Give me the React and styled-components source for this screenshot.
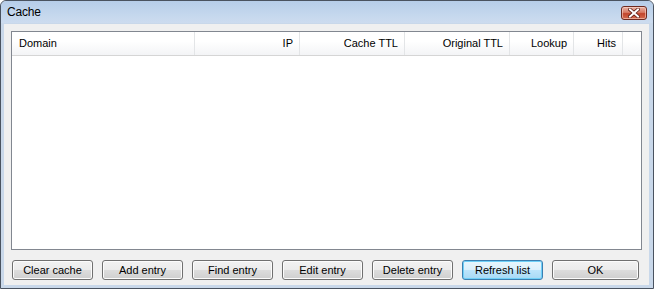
import React from "react";
import styled, { createGlobalStyle } from "styled-components";

const Global = createGlobalStyle`
  html, body { margin: 0; padding: 0; background: #fff; }
  body { font-family: "Liberation Sans", Arial, sans-serif; }
`;

const Window = styled.div`
  width: 654px;
  height: 289px;
  box-sizing: border-box;
  border: 1px solid #4a5360;
  border-radius: 6px 6px 0 0;
  background: #c9d8ea;
  display: flex;
  flex-direction: column;
  overflow: hidden;
`;

const TitleBar = styled.div`
  height: 22px;
  flex: none;
  display: flex;
  align-items: center;
  justify-content: space-between;
  padding: 0 6px 0 6px;
  background: linear-gradient(#b6cde9, #c4d7ed 60%, #cddcef);
  border-radius: 5px 5px 0 0;
`;

const Title = styled.span`
  font-size: 12px;
  color: #000;
  letter-spacing: -0.2px;
`;

const CloseButton = styled.div`
  width: 26px;
  height: 14px;
  box-sizing: border-box;
  margin-top: 1px;
  border: 1px solid #6e2a20;
  border-radius: 3px;
  background: linear-gradient(#e8b3a6, #d77a64 45%, #c2452c 55%, #d36a4e);
  box-shadow: inset 0 0 0 1px rgba(255, 220, 210, 0.55);
  display: flex;
  align-items: center;
  justify-content: center;
`;

const Frame = styled.div`
  flex: 1;
  padding: 1px 4px 3px 3px;
  display: flex;
`;

const Client = styled.div`
  flex: 1;
  background: #f0f0f0;
  padding: 7px 7px 0 7px;
  display: flex;
  flex-direction: column;
`;

const ListView = styled.div`
  width: 631px;
  height: 219px;
  box-sizing: border-box;
  border: 1px solid #828790;
  background: #fff;
  display: flex;
  flex-direction: column;
`;

const Header = styled.div`
  height: 24px;
  box-sizing: border-box;
  display: flex;
  background: linear-gradient(#ffffff, #ffffff 40%, #f3f4f6);
  border-bottom: 1px solid #d5d5d5;
`;

const HeaderCell = styled.div`
  width: ${(p) => p.$w}px;
  flex: ${(p) => (p.$grow ? 1 : "none")};
  box-sizing: border-box;
  border-right: ${(p) => (p.$grow ? "none" : "1px solid #e3e5e7")};
  display: flex;
  align-items: center;
  justify-content: ${(p) => (p.$right ? "flex-end" : "flex-start")};
  padding: 0 6px 1px 7px;
  font-size: 11px;
  color: #000;
`;

const ButtonRow = styled.div`
  display: flex;
  gap: 9px;
  margin-top: 10px;
  padding-left: 1px;
`;

const Button = styled.div`
  width: ${(p) => p.$w}px;
  height: 20px;
  box-sizing: border-box;
  border: 1px solid ${(p) => (p.$default ? "#3c7fb1" : "#707070")};
  border-radius: 3px;
  background: ${(p) =>
    p.$default
      ? "linear-gradient(#e9f6fd, #dbf0fc 50%, #bde5fc 50%, #a7d9f5)"
      : "linear-gradient(#f2f2f2, #ebebeb 50%, #dddddd 50%, #cfcfcf)"};
  box-shadow: inset 0 0 0 1px ${(p) => (p.$default ? "#6fd0f8" : "#fcfcfc")};
  display: flex;
  align-items: center;
  justify-content: center;
  font-size: 11px;
  color: #000;
  padding-bottom: 1px;
`;

const columns = [
  { label: "Domain", w: 183 },
  { label: "IP", w: 105, right: true },
  { label: "Cache TTL", w: 105, right: true },
  { label: "Original TTL", w: 105, right: true },
  { label: "Lookup", w: 64, right: true },
  { label: "Hits", w: 49, right: true },
];

const buttons = [
  { label: "Clear cache", w: 81 },
  { label: "Add entry", w: 81 },
  { label: "Find entry", w: 81 },
  { label: "Edit entry", w: 81 },
  { label: "Delete entry", w: 81 },
  { label: "Refresh list", w: 81, def: true },
  { label: "OK", w: 87 },
];

export default function App() {
  return (
    <>
      <Global />
      <Window>
        <TitleBar>
          <Title>Cache</Title>
          <CloseButton>
            <svg width="12" height="10" viewBox="0 0 12 10">
              <path d="M2 1.5 L10 8.5 M10 1.5 L2 8.5" stroke="#5a1c14" strokeWidth="3.6" strokeLinecap="square" />
              <path d="M2 1.5 L10 8.5 M10 1.5 L2 8.5" stroke="#ffffff" strokeWidth="2" strokeLinecap="square" />
            </svg>
          </CloseButton>
        </TitleBar>
        <Frame>
          <Client>
            <ListView>
              <Header>
                {columns.map((c) => (
                  <HeaderCell key={c.label} $w={c.w} $right={c.right}>
                    {c.label}
                  </HeaderCell>
                ))}
                <HeaderCell $grow />
              </Header>
            </ListView>
            <ButtonRow>
              {buttons.map((b) => (
                <Button key={b.label} $w={b.w} $default={b.def}>
                  {b.label}
                </Button>
              ))}
            </ButtonRow>
          </Client>
        </Frame>
      </Window>
    </>
  );
}
